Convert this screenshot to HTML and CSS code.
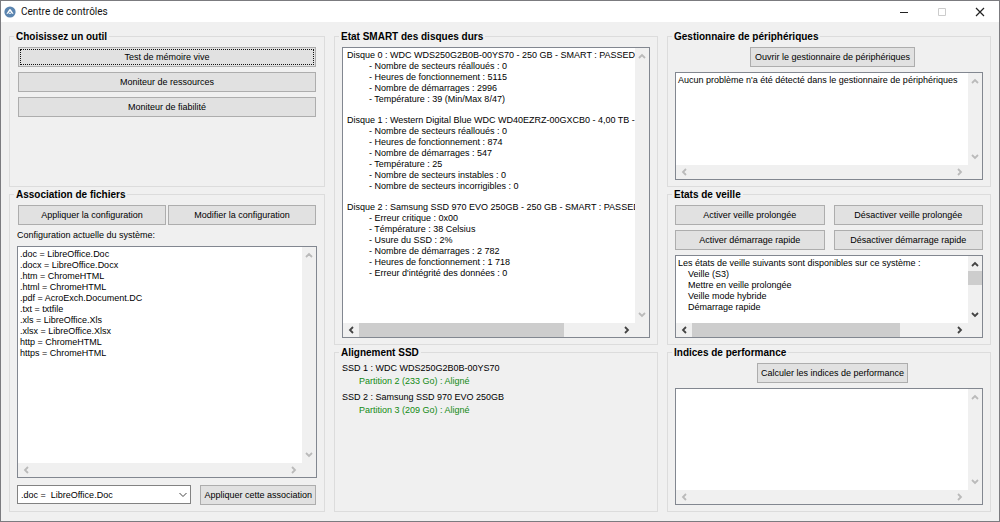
FILE: index.html
```html
<!DOCTYPE html>
<html lang="fr">
<head>
<meta charset="utf-8">
<title>Centre de contrôles</title>
<link rel="stylesheet" href="styles.css">
</head>
<body>
<svg class="sprite" aria-hidden="true">
  <symbol id="up" viewBox="0 0 8 6"><path d="M1 5 4 2 7 5" fill="none" stroke="currentColor" stroke-width="1.8"/></symbol>
  <symbol id="down" viewBox="0 0 8 6"><path d="M1 1 4 4 7 1" fill="none" stroke="currentColor" stroke-width="1.8"/></symbol>
  <symbol id="left" viewBox="0 0 6 8"><path d="M5 1 2 4 5 7" fill="none" stroke="currentColor" stroke-width="1.8"/></symbol>
  <symbol id="right" viewBox="0 0 6 8"><path d="M1 1 4 4 1 7" fill="none" stroke="currentColor" stroke-width="1.8"/></symbol>
</svg>
<div class="window">
  <header class="titlebar">
    <svg class="app-icon" viewBox="0 0 12 12" aria-hidden="true"><circle cx="6" cy="6" r="5.6" fill="#5b85b0"/><path d="M2.4 7.8 5.2 3.6Q6 2.6 6.8 3.6L9.6 7.8H7.9L6 5 4.1 7.8Z" fill="#fff"/><path d="M4.9 7.9 6 6.3 7.1 7.9Z" fill="#fff"/></svg>
    <h1 class="title">Centre de contrôles</h1>
    <div class="window-buttons">
      <button class="window-button" type="button" aria-label="Réduire"><svg width="10" height="10" viewBox="0 0 10 10"><path d="M1 5.5H9" stroke="#222"/></svg></button>
      <button class="window-button" type="button" aria-label="Agrandir" disabled><svg width="10" height="10" viewBox="0 0 10 10"><path d="M1.5 1.5H8.5V8.5H1.5Z" fill="none" stroke="#ccc"/></svg></button>
      <button class="window-button" type="button" aria-label="Fermer"><svg width="10" height="10" viewBox="0 0 10 10"><path d="M1 1 9 9M9 1 1 9" stroke="#222" stroke-width="1.2"/></svg></button>
    </div>
  </header>
  <main class="columns">
    <div class="column tools">
      <fieldset class="group">
        <legend>Choisissez un outil</legend>
        <div class="stack inset">
          <button class="button focused" type="button">Test de mémoire vive</button>
          <button class="button" type="button">Moniteur de ressources</button>
          <button class="button" type="button">Moniteur de fiabilité</button>
        </div>
      </fieldset>
      <fieldset class="group">
        <legend>Association de fichiers</legend>
        <div class="pair inset">
          <button class="button" type="button">Appliquer la configuration</button>
          <button class="button" type="button">Modifier la configuration</button>
        </div>
        <label class="caption" for="config">Configuration actuelle du système:</label>
        <div class="scrollbox">
          <textarea class="text" id="config" wrap="off" readonly>
.doc = LibreOffice.Doc
.docx = LibreOffice.Docx
.htm = ChromeHTML
.html = ChromeHTML
.pdf = AcroExch.Document.DC
.txt = txtfile
.xls = LibreOffice.Xls
.xlsx = LibreOffice.Xlsx
http = ChromeHTML
https = ChromeHTML</textarea>
          <div class="vbar"><svg class="v"><use href="#up"/></svg><svg class="v"><use href="#down"/></svg></div>
          <div class="hbar"><svg class="h"><use href="#left"/></svg><svg class="h"><use href="#right"/></svg></div>
        </div>
        <div class="apply-row">
          <div class="combo">
            <select class="select" aria-label="Association"><option>.doc =&nbsp; LibreOffice.Doc</option></select>
            <svg class="chevron" viewBox="0 0 8 6" aria-hidden="true"><path d="M.5 1 4 4.5 7.5 1" fill="none" stroke="#444"/></svg>
          </div>
          <button class="button" type="button">Appliquer cette association</button>
        </div>
      </fieldset>
    </div>

    <div class="column disks">
      <fieldset class="group">
        <legend>Etat SMART des disques durs</legend>
        <div class="scrollbox">
          <div class="text log" tabindex="0">
            <section class="disk">
              <p>Disque 0 : WDC WDS250G2B0B-00YS70 - 250 GB - SMART : PASSED</p>
              <ul>
                <li>- Nombre de secteurs réalloués : 0</li>
                <li>- Heures de fonctionnement : 5115</li>
                <li>- Nombre de démarrages : 2996</li>
                <li>- Température : 39 (Min/Max 8/47)</li>
              </ul>
            </section>
            <section class="disk">
              <p>Disque 1 : Western Digital Blue WDC WD40EZRZ-00GXCB0 - 4,00 TB -</p>
              <ul>
                <li>- Nombre de secteurs réalloués : 0</li>
                <li>- Heures de fonctionnement : 874</li>
                <li>- Nombre de démarrages : 547</li>
                <li>- Température : 25</li>
                <li>- Nombre de secteurs instables : 0</li>
                <li>- Nombre de secteurs incorrigibles : 0</li>
              </ul>
            </section>
            <section class="disk">
              <p>Disque 2 : Samsung SSD 970 EVO 250GB - 250 GB - SMART : PASSED</p>
              <ul>
                <li>- Erreur critique : 0x00</li>
                <li>- Témpérature : 38 Celsius</li>
                <li>- Usure du SSD : 2%</li>
                <li>- Nombre de démarrages : 2 782</li>
                <li>- Heures de fonctionnement : 1 718</li>
                <li>- Erreur d'intégrité des données : 0</li>
              </ul>
            </section>
          </div>
          <div class="vbar"><svg class="v"><use href="#up"/></svg><svg class="v"><use href="#down"/></svg></div>
          <div class="hbar active"><svg class="h"><use href="#left"/></svg><div class="track"><div class="thumb" style="width:79%"></div></div><svg class="h"><use href="#right"/></svg></div>
        </div>
      </fieldset>
      <fieldset class="group">
        <legend>Alignement SSD</legend>
        <dl class="align">
          <dt>SSD 1 : WDC WDS250G2B0B-00YS70</dt>
          <dd>Partition 2 (233 Go) : Aligné</dd>
          <dt>SSD 2 : Samsung SSD 970 EVO 250GB</dt>
          <dd>Partition 3 (209 Go) : Aligné</dd>
        </dl>
      </fieldset>
    </div>

    <div class="column system">
      <fieldset class="group">
        <legend>Gestionnaire de périphériques</legend>
        <div class="centered"><button class="button wide" type="button">Ouvrir le gestionnaire de périphériques</button></div>
        <div class="scrollbox">
          <textarea class="text" aria-label="Périphériques" wrap="off" readonly>Aucun problème n'a été détecté dans le gestionnaire de périphériques</textarea>
          <div class="vbar"><svg class="v"><use href="#up"/></svg><svg class="v"><use href="#down"/></svg></div>
          <div class="hbar"><svg class="h"><use href="#left"/></svg><svg class="h"><use href="#right"/></svg></div>
        </div>
      </fieldset>
      <fieldset class="group">
        <legend>Etats de veille</legend>
        <div class="quad">
          <button class="button" type="button">Activer veille prolongée</button>
          <button class="button" type="button">Désactiver veille prolongée</button>
          <button class="button" type="button">Activer démarrage rapide</button>
          <button class="button" type="button">Désactiver démarrage rapide</button>
        </div>
        <div class="scrollbox">
          <textarea class="text" aria-label="Etats de veille" wrap="off" readonly>
Les états de veille suivants sont disponibles sur ce système :
    Veille (S3)
    Mettre en veille prolongée
    Veille mode hybride
    Démarrage rapide</textarea>
          <div class="vbar active"><svg class="v"><use href="#up"/></svg><div class="track"><div class="thumb" style="height:38%"></div></div><svg class="v"><use href="#down"/></svg></div>
          <div class="hbar active"><svg class="h"><use href="#left"/></svg><div class="track"><div class="thumb" style="width:80%"></div></div><svg class="h"><use href="#right"/></svg></div>
        </div>
      </fieldset>
      <fieldset class="group">
        <legend>Indices de performance</legend>
        <div class="centered"><button class="button" type="button">Calculer les indices de performance</button></div>
        <div class="scrollbox">
          <textarea class="text" aria-label="Indices de performance" wrap="off" readonly></textarea>
          <div class="vbar"><svg class="v"><use href="#up"/></svg><svg class="v"><use href="#down"/></svg></div>
          <div class="hbar"><svg class="h"><use href="#left"/></svg><svg class="h"><use href="#right"/></svg></div>
        </div>
      </fieldset>
    </div>
  </main>
</div>
</body>
</html>
```
FILE: styles.css
```css
* { box-sizing: border-box; }
body, h1, p, ul, dl, dd, fieldset, legend { margin: 0; padding: 0; }
body, button, select, textarea {
  font-family: "Liberation Sans", Arial, sans-serif;
  font-size: 9px;
  color: #000;
}
.sprite { position: absolute; width: 0; height: 0; }

.window {
  display: flex;
  flex-direction: column;
  height: 100vh;
  min-height: 500px;
  border: 1px solid #7b7b7f;
  background: #f0f0f0;
}
.titlebar {
  display: flex;
  align-items: center;
  flex: none;
  height: 21px;
  padding-left: 3px;
  background: #fff;
}
.app-icon { width: 12px; height: 12px; margin-right: 5px; }
.title {
  flex: 1;
  font: 10px/20px Roboto, "Open Sans", sans-serif;
  color: #111;
}
.window-buttons { display: flex; }
.window-button {
  display: flex;
  align-items: center;
  justify-content: center;
  width: 38px;
  height: 20px;
  padding: 0;
  border: 0;
  background: none;
}

.columns {
  flex: 1;
  display: grid;
  grid-template-columns: 316fr 324fr 324fr;
  gap: 9px;
  min-height: 0;
  padding: 8px 8px 9px;
}
.column { display: grid; gap: 1px; min-width: 0; min-height: 0; }
.tools { grid-template-rows: minmax(0, 157fr) minmax(0, 324fr); }
.disks { grid-template-rows: minmax(0, 315fr) minmax(0, 166fr); }
.system { grid-template-rows: minmax(0, 157fr) minmax(0, 157fr) minmax(0, 166fr); }
.group {
  display: flex;
  flex-direction: column;
  min-width: 0;
  min-height: 0;
  padding: 4px 7px 6px;
  border: 1px solid #dcdcdc;
}
legend {
  padding: 0 2px;
  margin-left: -3px;
  font: bold 10px/13px "Liberation Sans", Arial, sans-serif;
}

.button {
  height: 20px;
  padding: 0 3px;
  border: 1px solid #adadad;
  background: #e1e1e1;
  line-height: 18px;
  white-space: nowrap;
}
.focused { outline: 1px dotted #111; outline-offset: -3px; }
.inset { padding: 0 1px; }
.stack { display: grid; gap: 5px; }
.pair { display: grid; grid-template-columns: 1fr 1fr; gap: 2px; }
.quad { display: grid; grid-template-columns: 1fr 1fr; gap: 5px 9px; margin-bottom: 5px; }
.centered { display: flex; justify-content: center; padding-left: 7px; margin-bottom: 5px; }
.centered .button { min-width: 148px; }
.centered .wide { min-width: 165px; }
.caption { padding: 4px 0; line-height: 13px; }

.scrollbox {
  flex: 1;
  display: grid;
  grid-template: minmax(0, 1fr) 14px / minmax(0, 1fr) 14px;
  min-height: 0;
  border: 1px solid #828790;
  background: #f0f0f0;
}
.text {
  width: 100%;
  height: 100%;
  padding: 2px;
  border: 0;
  outline: 0;
  background: #fff;
  line-height: 11px;
  white-space: pre;
  overflow: hidden;
  resize: none;
}
.log {
  display: flex;
  flex-direction: column;
  gap: 10px;
  padding-left: 4px;
  white-space: nowrap;
}
.disk ul { padding-left: 22px; list-style: none; }
.vbar, .hbar { display: flex; justify-content: space-between; align-items: center; color: #bababa; }
.vbar { flex-direction: column; padding: 5px 0; }
.hbar { padding: 0 5px; }
.vbar.active, .hbar.active { color: #444; }
.v { width: 8px; height: 6px; }
.h { width: 6px; height: 8px; }
.track { flex: 1; align-self: stretch; }
.hbar .track { margin: 0 5px; }
.vbar .track { margin: 4px 0; }
.thumb { width: 100%; height: 100%; background: #cdcdcd; }

.apply-row { display: flex; gap: 9px; padding: 7px 1px 0 0; }
.apply-row .button { min-width: 115px; }
.combo { position: relative; flex: 1; }
.select {
  width: 100%;
  height: 19px;
  padding: 0 16px 0 3px;
  border: 1px solid #828282;
  border-radius: 0;
  background: #fff;
  appearance: none;
}
.chevron { position: absolute; right: 4px; top: 7px; width: 8px; height: 6px; pointer-events: none; }

.align dt { line-height: 13px; margin-top: 4px; }
.align dt:first-child { margin-top: -1px; }
.align dd { padding-left: 17px; line-height: 12px; color: #128a12; }
```
